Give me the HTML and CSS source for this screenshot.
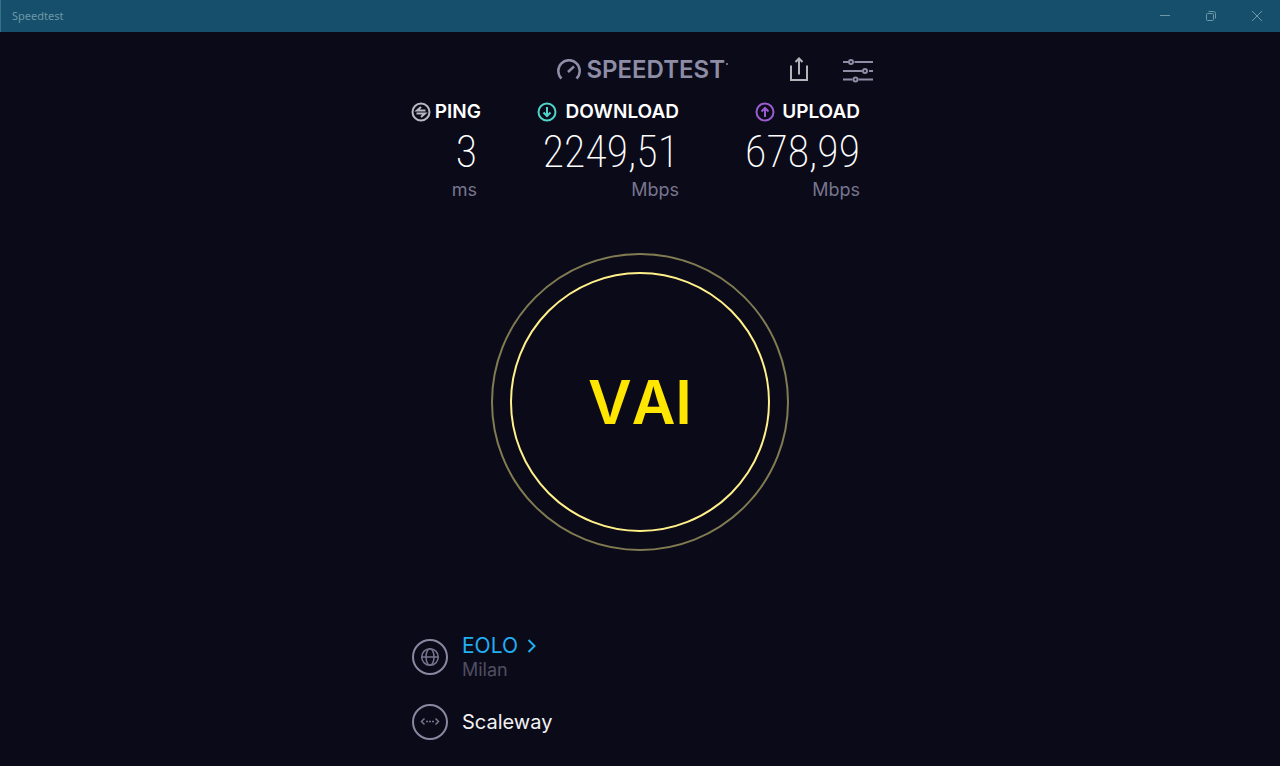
FILE: index.html
```html
<!DOCTYPE html>
<html lang="it">
<head>
    <meta charset="UTF-8">
    <meta name="viewport" content="width=device-width, initial-scale=1.0">
    <title>Speedtest</title>
    <link rel="stylesheet" href="styles.css">
</head>
<body>
    <header class="titlebar">
        <span class="titlebar-name">Speedtest</span>
        <div class="window-controls">
            <button type="button" aria-label="Minimize">
                <svg width="10" height="10" viewBox="0 0 10 10"><path d="M0 4.5h10"/></svg>
            </button>
            <button type="button" aria-label="Restore">
                <svg width="10" height="10" viewBox="0 0 10 10"><rect x=".5" y="2.5" width="7" height="7" rx="1"/><path d="M2.5 .5H7.5a2 2 0 0 1 2 2V7.5"/></svg>
            </button>
            <button type="button" aria-label="Close">
                <svg width="10" height="10" viewBox="0 0 10 10"><path d="M0 0l10 10M10 0L0 10"/></svg>
            </button>
        </div>
    </header>

    <main class="app">
        <div class="toolbar">
            <h1 class="logo">
                <svg width="24" height="22" viewBox="0 0 24 22"><path d="M4.5 19.500A10.700 10.700 0 1 1 19.500 19.500"/><path d="M11 13l6-5.500"/></svg>
                <span>SPEEDTEST</span>
                <svg class="mark" width="2" height="2" viewBox="0 0 2 2"><circle cx="1" cy="1" r="1"/></svg>
            </h1>
            <button type="button" class="tool share" aria-label="Share">
                <svg width="18" height="26" viewBox="0 0 18 26"><path d="M1 8.500V23h16V8.500M9 17.500V2M5.500 5L9 1.500 12.500 5"/></svg>
            </button>
            <button type="button" class="tool settings" aria-label="Settings">
                <svg width="30" height="26" viewBox="0 0 30 26"><path d="M0 5h5.500M11.500 5H30M0 14h19M26 14H30M0 22.500h9.500M15.500 22.500H30"/><circle cx="8" cy="5" r="2"/><circle cx="22" cy="14" r="2"/><circle cx="12.500" cy="22.500" r="2"/></svg>
            </button>
        </div>

        <section class="results">
            <div class="result ping">
                <h2>
                    <svg width="20" height="20" viewBox="0 0 20 20"><circle cx="10" cy="10" r="8.500"/><path d="M14.500 8.500H6L10 5M5.500 11.500H14L10 15"/></svg>
                    PING
                </h2>
                <p class="value">3</p>
                <p class="unit">ms</p>
            </div>
            <div class="result download">
                <h2>
                    <svg width="20" height="20" viewBox="0 0 20 20"><circle cx="10" cy="10" r="8.500"/><path d="M10 5v9M6.500 10.500L10 14l3.500-3.500"/></svg>
                    DOWNLOAD
                </h2>
                <p class="value">2249,51</p>
                <p class="unit">Mbps</p>
            </div>
            <div class="result upload">
                <h2>
                    <svg width="20" height="20" viewBox="0 0 20 20"><circle cx="10" cy="10" r="8.500"/><path d="M10 15V6M6.500 9.500L10 6l3.500 3.500"/></svg>
                    UPLOAD
                </h2>
                <p class="value">678,99</p>
                <p class="unit">Mbps</p>
            </div>
        </section>

        <button type="button" class="go"><span>VAI</span></button>

        <section class="connection">
            <div class="row">
                <svg width="36" height="36" viewBox="0 0 36 36"><circle class="ring" cx="18" cy="18" r="17"/><g class="glyph"><circle cx="18" cy="18" r="8.300"/><ellipse cx="18" cy="18" rx="4" ry="8.300"/><path d="M9.700 18h16.600"/></g></svg>
                <div>
                    <a href="#" class="provider">EOLO <svg width="10" height="14" viewBox="0 0 10 14"><path d="M1.500 1L7.500 7l-6 6"/></svg></a>
                    <p class="city">Milan</p>
                </div>
            </div>
            <div class="row">
                <svg width="36" height="36" viewBox="0 0 36 36"><circle class="ring" cx="18" cy="18" r="17"/><path class="glyph" d="M12.500 14.500l-3 3 3 3M23.500 14.500l3 3-3 3M14 17.500h2M17 17.500h2M20 17.500h2"/></svg>
                <p class="server">Scaleway</p>
            </div>
        </section>
    </main>
</body>
</html>
```
FILE: styles.css
```css
* {
    box-sizing: border-box;
}
body {
    margin: 0;
    min-height: 100vh;
    display: flex;
    flex-direction: column;
    background: #0b0a19;
    border-bottom: 2px solid #ffffff;
    color: #ffffff;
    font-family: Inter, sans-serif;
}
h1, h2, p {
    margin: 0;
}
button {
    padding: 0;
    border: none;
    background: none;
    color: inherit;
    font-family: inherit;
    cursor: pointer;
}
svg {
    flex: none;
    fill: none;
    stroke: currentColor;
}
.titlebar {
    display: flex;
    align-items: center;
    justify-content: space-between;
    height: 32px;
    padding-left: 11px;
    background: #154f6b;
    border-left: 1px solid #37708a;
    color: #6e98a9;
}
.titlebar-name {
    font-family: "Noto Sans", sans-serif;
    font-size: 11px;
    line-height: 30px;
}
.window-controls {
    display: flex;
}
.window-controls button {
    display: flex;
    align-items: center;
    justify-content: center;
    width: 46px;
    height: 32px;
}
.app {
    flex: 1;
    display: flex;
    flex-direction: column;
    width: 100%;
    max-width: 468px;
    margin: 0 auto;
    padding: 24px 0 26px;
}
.toolbar {
    display: flex;
    align-items: center;
    justify-content: flex-end;
    height: 28px;
    padding-right: 1px;
    color: #8e8da6;
}
.logo {
    display: flex;
    align-items: center;
    gap: 5px;
    margin-right: 62px;
    font-size: 24px;
    font-weight: 600;
    line-height: 30px;
}
.logo svg {
    stroke-width: 2.5;
}
.logo .mark {
    align-self: flex-start;
    margin: 8px 0 0 -4px;
    fill: currentColor;
    stroke: none;
}
.tool {
    display: flex;
}
.tool svg {
    stroke-width: 2;
}
.share {
    margin-right: 35px;
    color: #b5b4b8;
}
.results {
    display: grid;
    grid-template-columns: 75px 198px 181px;
    margin-top: 16px;
    text-align: right;
}
.result h2 {
    display: flex;
    align-items: center;
    justify-content: flex-end;
    gap: 7px;
    font-size: 19px;
    font-weight: 600;
    line-height: 24px;
}
.result.download h2 {
    gap: 9px;
}
.result.ping h2 {
    gap: 4px;
}
.result svg {
    stroke-width: 2;
}
.ping svg {
    color: #b9b8c0;
}
.download svg {
    color: #4fd5cb;
}
.upload svg {
    color: #9c5bd2;
}
.value {
    font-family: "Roboto Condensed", Roboto, sans-serif;
    font-size: 44px;
    font-weight: 200;
    line-height: 56px;
}
.unit {
    color: #77758e;
    font-size: 18px;
    line-height: 20px;
}
.ping .value, .ping .unit {
    padding-right: 4px;
}
.go {
    display: flex;
    align-self: center;
    width: 298px;
    height: 298px;
    margin-top: 53px;
    padding: 17px;
    border: 2px solid #817b52;
    border-radius: 50%;
    color: #ffe600;
    font-size: 60px;
    font-weight: 600;
    font-kerning: none;
}
.go span {
    flex: 1;
    align-self: stretch;
    display: flex;
    align-items: center;
    justify-content: center;
    border: 2px solid #fff089;
    border-radius: 50%;
}
.connection {
    display: flex;
    flex-direction: column;
    gap: 23px;
    margin-top: auto;
    padding-left: 6px;
}
.row {
    display: flex;
    align-items: center;
    gap: 14px;
    color: #77758e;
}
.ring {
    stroke: #8a88a0;
    stroke-width: 2;
}
.glyph {
    stroke-width: 1.5;
}
.provider {
    display: flex;
    align-items: center;
    gap: 9px;
    color: #21aef3;
    font-size: 21px;
    line-height: 26px;
    text-decoration: none;
}
.provider svg {
    stroke-width: 2;
}
.city {
    color: #504e63;
    font-size: 18px;
    line-height: 22px;
}
.server {
    color: #f2f2f2;
    font-size: 20px;
    line-height: 28px;
}
```
